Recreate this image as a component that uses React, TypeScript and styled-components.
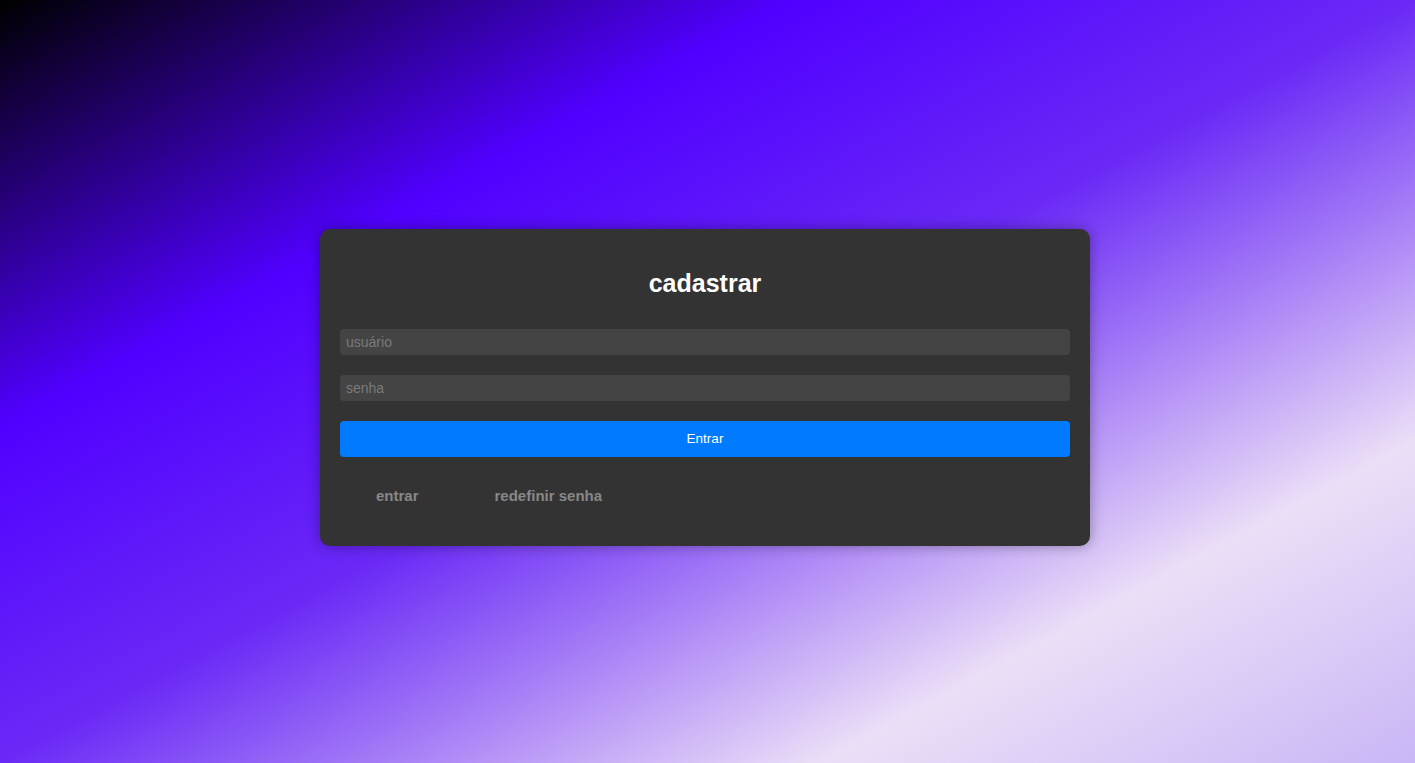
import React from "react";
import styled, { createGlobalStyle } from "styled-components";

const GlobalStyle = createGlobalStyle`
  html, body {
    margin: 0;
    padding: 0;
  }
  body {
    font-family: "Liberation Sans", Arial, sans-serif;
    min-height: 100vh;
    background: linear-gradient(
      to bottom right,
      #000000 0%,
      #5000ff 28%,
      #6a29f6 50%,
      #ebdff7 79%,
      #c9b6f6 100%
    );
    background-attachment: fixed;
  }
`;

const Page = styled.div`
  box-sizing: border-box;
  min-height: 100vh;
  display: flex;
  align-items: center;
  justify-content: center;
  padding: 12px 5px 0 0;
`;

const Card = styled.form`
  box-sizing: border-box;
  width: 770px;
  padding: 20px;
  background: #333333;
  border-radius: 10px;
  box-shadow: 0 0 14px rgba(0, 0, 0, 0.35);
  display: flex;
  flex-direction: column;
`;

const Title = styled.h2`
  margin: 20px 0 32px;
  font-size: 25px;
  line-height: 28px;
  font-weight: 700;
  color: #ffffff;
  text-align: center;
`;

const Field = styled.input`
  box-sizing: border-box;
  height: 26px;
  margin: 0 0 20px;
  padding: 0 6px;
  border: none;
  border-radius: 4px;
  background: #444444;
  color: #dddddd;
  font-family: "Liberation Sans", Arial, sans-serif;
  font-size: 14px;
  outline: none;
  &::placeholder {
    color: #7a7a7a;
  }
`;

const Submit = styled.button`
  height: 36px;
  padding: 0 0 2px;
  border: none;
  border-radius: 4px;
  background: #007bff;
  color: #ffffff;
  font-family: "Liberation Sans", Arial, sans-serif;
  font-size: 13.5px;
  cursor: pointer;
`;

const LinkRow = styled.div`
  display: flex;
  gap: 4px;
  margin: 30px 0 21px;
  line-height: 18px;
`;

const NavLink = styled.a`
  margin: 0 36px;
  color: #888888;
  font-size: 15px;
  font-weight: 700;
  text-decoration: none;
  cursor: pointer;
`;

export default function App() {
  return (
    <>
      <GlobalStyle />
      <Page>
        <Card onSubmit={(e) => e.preventDefault()}>
          <Title>cadastrar</Title>
          <Field type="text" placeholder="usuário" />
          <Field type="password" placeholder="senha" />
          <Submit type="submit">Entrar</Submit>
          <LinkRow>
            <NavLink>entrar</NavLink>
            <NavLink>redefinir senha</NavLink>
          </LinkRow>
        </Card>
      </Page>
    </>
  );
}
